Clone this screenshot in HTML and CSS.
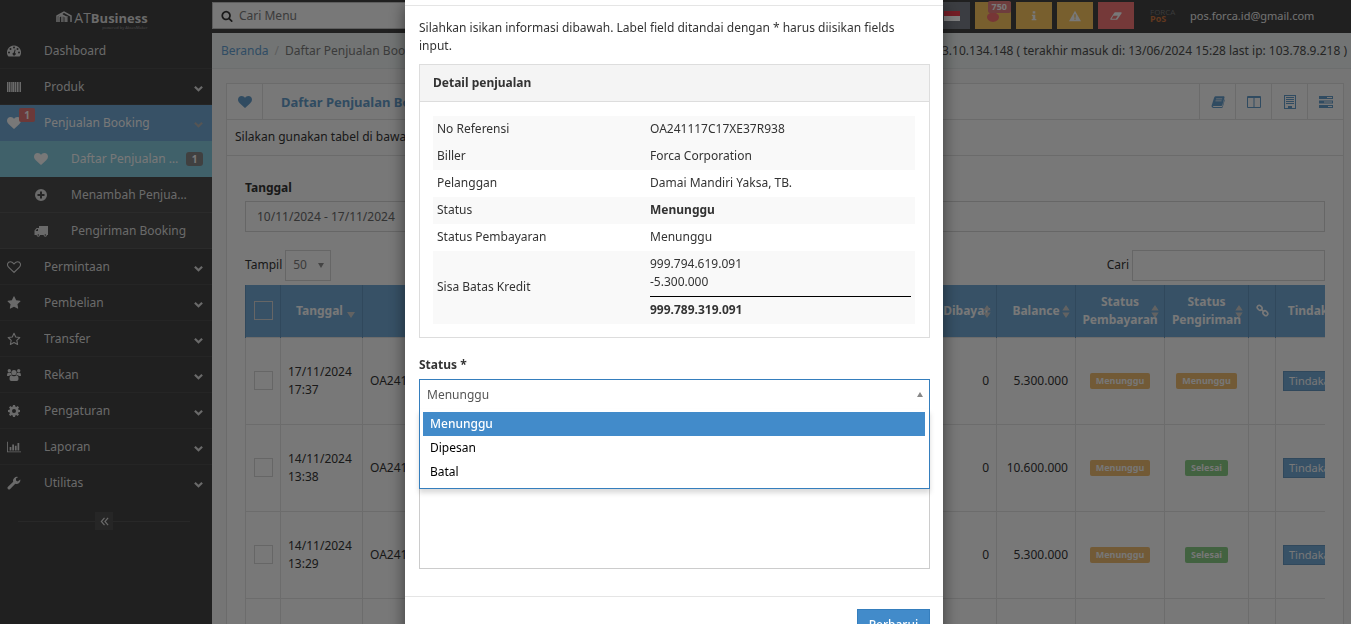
FILE: index.html
```html
<!DOCTYPE html>
<html lang="id">
<head>
<meta charset="utf-8">
<title>Daftar Penjualan Booking - ATBusiness</title>
<link rel="stylesheet" href="styles.css">
</head>
<body>
<svg class="defs" aria-hidden="true">
  <symbol id="heart" viewBox="0 0 1792 1792"><path d="M896 1664q-26 0-44-18l-624-602q-10-8-27.5-26t-55.5-65.5-68-97.5-53.5-121-23.5-138q0-220 127-344t351-124q62 0 126.5 21.5t120 58 95.5 68.5 76 68q36-36 76-68t95.5-68.5 120-58 126.5-21.5q224 0 351 124t127 344q0 221-229 450l-623 600q-18 18-44 18z"/></symbol>
  <symbol id="heart-o" viewBox="0 0 14 14"><path d="M7 12.4 1.8 7.4C-.6 5 .6 1.8 3.4 1.8 5.300 1.800 6 2.800 7 3.900 8 2.800 8.700 1.800 10.600 1.800c2.800 0 4 3.200 1.600 5.600z" fill="none" stroke="currentColor" stroke-width="1.100"/></symbol>
  <symbol id="star" viewBox="0 0 1792 1792"><path d="M1728 647q0 22-26 48l-363 354 86 500q1 7 1 20 0 21-10.500 35.500t-30.500 14.500q-19 0-40-12l-449-236-449 236q-22 12-40 12-21 0-31.500-14.500t-10.500-35.500q0-6 2-20l86-500-364-354q-25-27-25-48 0-37 56-46l502-73 225-455q19-41 49-41t49 41l225 455 502 73q56 9 56 46z"/></symbol>
  <symbol id="star-o" viewBox="0 0 14 14"><path d="M7 1.300 8.700 5l4.100.5-3 2.900.8 4L7 10.500l-3.600 1.900.8-4-3-2.900L5.300 5z" fill="none" stroke="currentColor" stroke-width="1.100" stroke-linejoin="round"/></symbol>
  <symbol id="search" viewBox="0 0 1792 1792"><path d="M1216 832q0-185-131.500-316.500t-316.500-131.500-316.500 131.500-131.500 316.500 131.500 316.500 316.500 131.500 316.500-131.500 131.500-316.500zm512 832q0 52-38 90t-90 38q-54 0-90-38l-343-342q-179 124-399 124-143 0-273.500-55.500t-225-150-150-225-55.500-273.500 55.500-273.500 150-225 225-150 273.500-55.500 273.500 55.500 225 150 150 225 55.500 273.500q0 220-124 399l343 343q37 37 37 90z"/></symbol>
  <symbol id="gauge" viewBox="0 0 14 14"><path fill-rule="evenodd" d="M7 1.500a7 7 0 0 0-6 10.600q.2.400.6.400h10.800q.4 0 .6-.4A7 7 0 0 0 7 1.500zM2 7.500a1 1 0 1 1 0 2 1 1 0 0 1 0-2zm1.500-3.500a1 1 0 1 1 0 2 1 1 0 0 1 0-2zM7 2.500a1 1 0 1 1 0 2 1 1 0 0 1 0-2zm3.500 1.500a1 1 0 1 1 0 2 1 1 0 0 1 0-2zM12 7.500a1 1 0 1 1 0 2 1 1 0 0 1 0-2zM7.700 5.500l.9.200-.7 3a1.500 1.500 0 1 1-1-.2z"/></symbol>
  <symbol id="barcode" viewBox="0 0 14 14"><path d="M0 2h1v10H0zM1.500 2H3v10H1.500zM3.500 2h1.300v10H3.500zM5.300 2h2v10h-2zM7.800 2h1.300v10H7.800zM9.700 2h1.700v10H9.700zM11.800 2h.7v10h-.7zM13 2h1v10h-1z"/></symbol>
  <symbol id="chevron" viewBox="0 0 10 10"><path d="m1 3 4 4 4-4" fill="none" stroke="currentColor" stroke-width="2.400"/></symbol>
  <symbol id="plus" viewBox="0 0 14 14"><path fill-rule="evenodd" d="M7 1a6 6 0 1 0 0 12A6 6 0 0 0 7 1zM6 3.500h2V6h2.500v2H8v2.500H6V8H3.500V6H6z"/></symbol>
  <symbol id="truck" viewBox="0 0 14 14"><path fill-rule="evenodd" d="M5 2h9v9h-1a1.700 1.700 0 0 1-3.400 0H6a1.700 1.700 0 0 1-3.400 0H.5V6.500L2.600 4H5zM1.600 7H4V5H3zM4.300 10.200a.8.800 0 1 0 0 1.600.8.800 0 0 0 0-1.600zm7 0a.8.800 0 1 0 0 1.600.8.800 0 0 0 0-1.600z"/></symbol>
  <symbol id="users" viewBox="0 0 14 14"><circle cx="2.300" cy="2.700" r="1.700"/><circle cx="11.700" cy="2.700" r="1.700"/><circle cx="7" cy="4.500" r="2.600"/><path d="M0 7.500Q0 4.500 1.500 4.800L4 5q.2 1.500 1 2H3.200q-.8.700-1 1H.8Q0 8 0 7.500zM14 7.500q0-3-1.500-2.700L10 5q-.2 1.500-1 2h1.800q.8.700 1 1h1.400q.8 0 .8-.5zM2.500 11q0-3.700 2-3.700Q5.500 8.300 7 8.300t2.500-1q2 0 2 3.700 0 2-1.800 2H4.300q-1.800 0-1.800-2z"/></symbol>
  <symbol id="gear" viewBox="0 0 14 14"><path fill-rule="evenodd" d="M6 1h2l.3 1.600 1 .4L10.700 2 12 3.400l-.9 1.400.4 1 1.500.2v2l-1.600.3-.4 1 1 1.300-1.400 1.400-1.300-.9-1 .4L8 13H6l-.3-1.500-1-.4-1.400.9L2 10.600l.9-1.300-.4-1L1 8V6l1.600-.3.400-1L2 3.400 3.400 2l1.300.9 1-.4zM7 5a2 2 0 1 0 0 4 2 2 0 0 0 0-4z"/></symbol>
  <symbol id="chart" viewBox="0 0 16 14"><path d="M0 1h1v11h15v1H0zM3 7h2v4H3zM6 4h2v7H6zM9 5.500h2V11H9zM12 2.500h2V11h-2z"/></symbol>
  <symbol id="wrench" viewBox="0 0 14 14"><path d="M13.300 3.500a3.800 3.800 0 0 1-5 4.300L3.200 13a1.500 1.500 0 0 1-2.200-2.200l5.200-5a3.900 3.900 0 0 1 5-4.800L9 2.400v2l1.600 1z"/></symbol>
  <symbol id="book" viewBox="0 0 14 14"><path fill-rule="evenodd" d="M4.500 1.200h8.300q1 .4.700 1.400L11.400 10q-.3 1-1.300 1H2.300q-.8.700.2 1h8.200l.7-.6L13.500 4l.3 1-2 7q-.4 1-1.300 1H2.300Q.4 12.700.5 11L3 3q.4-1.700 1.500-1.800zM5.200 3.500h6v.8h-6.200zM4.600 5.500h6v.8H4.400z"/></symbol>
  <symbol id="columns" viewBox="0 0 14 14"><path fill-rule="evenodd" d="M1 1h12q1 0 1 1v10q0 1-1 1H1q-1 0-1-1V2q0-1 1-1zM1 3v9h5.500V3zm6.500 0v9H13V3z"/></symbol>
  <symbol id="building" viewBox="0 0 14 14"><path fill-rule="evenodd" d="M1 0h12v14H1zM2 1v12h10V1z"/><path d="M3 2h8v1H3zM3 4h8v1H3zM3 6h8v1H3zM3 8h8v1H3zM5 11h4v2H5z"/></symbol>
  <symbol id="tasks" viewBox="0 0 14 14"><path fill-rule="evenodd" d="M0 1h14v3H0zM8 2v1h5V2zM0 5.500h14v3H0zM5 6.500v1h8v-1zM0 10h14v3H0zM9 11v1h4v-1z"/></symbol>
  <symbol id="link" viewBox="0 0 14 14"><g fill="none" stroke="currentColor" stroke-width="1.700"><rect x="1.200" y="2" width="5.600" height="4.200" rx="2" transform="rotate(45 4 4)"/><rect x="7.200" y="7.800" width="5.600" height="4.200" rx="2" transform="rotate(45 10 10)"/><path d="m5.200 5.200 3.600 3.600"/></g></symbol>
  <symbol id="sort" viewBox="0 0 8 14"><path d="M0 6 4 0l4 6zM0 8l4 6 4-6z"/></symbol>
</svg>

<div class="app">
  <aside class="sidebar">
    <a class="brand" href="#">
      <svg class="brand-mark" viewBox="0 0 16 12"><path d="M1 11V5l7-4 7 4v6M3 11V6l3-2v7M6 4l4 2v5" fill="none" stroke="currentColor" stroke-width="1.500"/><path d="M7 5h5v6H7z" opacity=".5"/></svg>
      <span class="brand-name"><span>AT<b>Business</b></span><small>powered by AksesMaker</small></span>
    </a>
    <nav>
      <ul class="menu">
        <li><a href="#"><svg class="ico"><use href="#gauge"/></svg><span class="lbl">Dashboard</span></a></li>
        <li><a href="#"><svg class="ico"><use href="#barcode"/></svg><span class="lbl">Produk</span><svg class="chev"><use href="#chevron"/></svg></a></li>
        <li class="open"><a href="#"><svg class="ico"><use href="#heart"/></svg><span class="bubble">1</span><span class="lbl">Penjualan Booking</span><svg class="chev"><use href="#chevron"/></svg></a>
          <ul class="submenu">
            <li class="current"><a href="#"><svg class="ico"><use href="#heart"/></svg><span class="lbl">Daftar Penjualan Booking</span><span class="count">1</span></a></li>
            <li><a href="#"><svg class="ico"><use href="#plus"/></svg><span class="lbl">Menambah Penjualan</span></a></li>
            <li><a href="#"><svg class="ico"><use href="#truck"/></svg><span class="lbl">Pengiriman Booking</span></a></li>
          </ul>
        </li>
        <li><a href="#"><svg class="ico"><use href="#heart-o"/></svg><span class="lbl">Permintaan</span><svg class="chev"><use href="#chevron"/></svg></a></li>
        <li><a href="#"><svg class="ico"><use href="#star"/></svg><span class="lbl">Pembelian</span><svg class="chev"><use href="#chevron"/></svg></a></li>
        <li><a href="#"><svg class="ico"><use href="#star-o"/></svg><span class="lbl">Transfer</span><svg class="chev"><use href="#chevron"/></svg></a></li>
        <li><a href="#"><svg class="ico"><use href="#users"/></svg><span class="lbl">Rekan</span><svg class="chev"><use href="#chevron"/></svg></a></li>
        <li><a href="#"><svg class="ico"><use href="#gear"/></svg><span class="lbl">Pengaturan</span><svg class="chev"><use href="#chevron"/></svg></a></li>
        <li><a href="#"><svg class="ico"><use href="#chart"/></svg><span class="lbl">Laporan</span><svg class="chev"><use href="#chevron"/></svg></a></li>
        <li><a href="#"><svg class="ico"><use href="#wrench"/></svg><span class="lbl">Utilitas</span><svg class="chev"><use href="#chevron"/></svg></a></li>
      </ul>
    </nav>
    <div class="collapse"><button type="button" aria-label="Ciutkan menu"><svg viewBox="0 0 10 10"><path d="M5 1 1.500 5 5 9M9 1 5.500 5 9 9" fill="none" stroke="currentColor" stroke-width="1.300"/></svg></button></div>
  </aside>

  <div class="main">
    <header class="topbar">
      <label class="search"><svg><use href="#search"/></svg><input type="text" placeholder="Cari Menu" aria-label="Cari Menu"></label>
      <div class="actions">
        <button class="act flag" type="button" aria-label="Bahasa"><svg viewBox="0 0 16 10"><path fill="#e83b4c" d="M0 0h16v5H0z"/><path fill="#fff" d="M0 5h16v5H0z"/></svg></button>
        <button class="act warn" type="button" aria-label="Notifikasi"><svg viewBox="0 0 14 14"><path fill="#ee6c6c" d="M3 1h8v3q3 1 3 4c0 4-4 6-7 6s-7-2-7-6q0-3 3-4z"/></svg><span class="note">750</span></button>
        <button class="act warn" type="button" aria-label="Info"><svg viewBox="0 0 14 14"><path d="M5.500 1.500h3v2.500h-3zM4.500 5.500h4v5h1.200V12H4.300v-1.500h1.200V7h-1z"/></svg></button>
        <button class="act warn" type="button" aria-label="Peringatan"><svg viewBox="0 0 14 14"><path fill-rule="evenodd" d="M7 1l7 12H0zM6.200 5v4h1.600V5zm0 5v1.500h1.600V10z"/></svg></button>
        <button class="act danger" type="button" aria-label="Hapus cache"><svg viewBox="0 0 14 14"><path fill-rule="evenodd" d="M6 2.500h7q1 .3.600 1.200l-5 7.300q-.4.500-1 .5H1Q0 11.200.4 10.300L5 3.200q.4-.6 1-.7zM4 6.800 1.800 10.300h5.100L9.200 6.800z"/></svg></button>
        <a class="user" href="#">
          <span class="user-logo"><span class="forca">FORCA</span><b>PoS</b></span>
          <span>pos.forca.id@gmail.com</span>
        </a>
      </div>
    </header>

    <div class="crumbs">
      <div><a href="#">Beranda</a><span class="sep">/</span><span>Daftar Penjualan Booking</span></div>
      <div class="ip">103.10.134.148 ( terakhir masuk di: 13/06/2024 15:28 last ip: 103.78.9.218 )</div>
    </div>

    <section class="box">
      <div class="box-head">
        <span class="cell"><svg><use href="#heart"/></svg></span>
        <h2>Daftar Penjualan Booking</h2>
        <a class="cell end" href="#" aria-label="Buku"><svg><use href="#book"/></svg></a>
        <a class="cell end" href="#" aria-label="Kolom"><svg><use href="#columns"/></svg></a>
        <a class="cell end" href="#" aria-label="Gudang"><svg><use href="#building"/></svg></a>
        <a class="cell end" href="#" aria-label="Tindakan"><svg><use href="#tasks"/></svg></a>
      </div>
      <p class="intro">Silakan gunakan tabel di bawah ini untuk menavigasi atau memfilter hasil.</p>
      <div class="box-body">
        <label class="strong" for="range">Tanggal</label>
        <input class="field" id="range" type="text" value="10/11/2024 - 17/11/2024">
        <div class="tools">
          <label>Tampil <select class="length"><option>50</option></select></label>
          <label>Cari <input class="find" type="text"></label>
        </div>
        <div class="scroll">
          <table class="list">
            <colgroup><col class="c35"><col class="c82"><col class="c173"><col class="c130"><col class="c150"><col class="c121"><col class="c60"><col class="c79"><col class="c89"><col class="c84"><col class="c27"><col class="c80"></colgroup>
            <thead><tr>
              <th><input type="checkbox" aria-label="Pilih semua"></th>
              <th class="sorted">Tanggal</th><th>No Referensi</th><th>Biller</th><th>Pelanggan</th><th>Total</th>
              <th>Dibayar<svg class="sort"><use href="#sort"/></svg></th>
              <th>Balance<svg class="sort"><use href="#sort"/></svg></th>
              <th>Status Pembayaran<svg class="sort"><use href="#sort"/></svg></th>
              <th>Status Pengiriman<svg class="sort"><use href="#sort"/></svg></th>
              <th><svg class="chain"><use href="#link"/></svg></th>
              <th>Tindakan</th>
            </tr></thead>
            <tbody>
              <tr><td class="mid"><input type="checkbox" aria-label="Pilih"></td><td>17/11/2024 17:37</td><td>OA241117C17XE37R938</td><td>Forca Corporation</td><td>Damai Mandiri Yaksa</td><td class="num">5.300.000</td><td class="num">0</td><td class="num">5.300.000</td><td class="mid"><span class="tag wait">Menunggu</span></td><td class="mid"><span class="tag wait">Menunggu</span></td><td></td><td><button class="go" type="button">Tindakan</button></td></tr>
              <tr><td class="mid"><input type="checkbox" aria-label="Pilih"></td><td>14/11/2024 13:38</td><td>OA241114C17XE37R937</td><td>Forca Corporation</td><td>Damai Mandiri Yaksa</td><td class="num">10.600.000</td><td class="num">0</td><td class="num">10.600.000</td><td class="mid"><span class="tag wait">Menunggu</span></td><td class="mid"><span class="tag done">Selesai</span></td><td></td><td><button class="go" type="button">Tindakan</button></td></tr>
              <tr><td class="mid"><input type="checkbox" aria-label="Pilih"></td><td>14/11/2024 13:29</td><td>OA241114C17XE37R936</td><td>Forca Corporation</td><td>Damai Mandiri Yaksa</td><td class="num">5.300.000</td><td class="num">0</td><td class="num">5.300.000</td><td class="mid"><span class="tag wait">Menunggu</span></td><td class="mid"><span class="tag done">Selesai</span></td><td></td><td><button class="go" type="button">Tindakan</button></td></tr>
              <tr><td></td><td></td><td></td><td></td><td></td><td></td><td></td><td></td><td></td><td></td><td></td><td></td></tr>
            </tbody>
          </table>
        </div>
      </div>
    </section>
  </div>
</div>

<div class="backdrop">
  <form class="modal" role="dialog" aria-label="Perbarui Status">
    <div class="modal-head"></div>
    <div class="modal-body">
      <p class="lead">Silahkan isikan informasi dibawah. Label field ditandai dengan * harus diisikan fields input.</p>
      <section class="card">
        <h3>Detail penjualan</h3>
        <div class="card-body">
          <table class="detail">
            <tr class="tint"><td>No Referensi</td><td>OA241117C17XE37R938</td></tr>
            <tr class="tint"><td>Biller</td><td>Forca Corporation</td></tr>
            <tr><td>Pelanggan</td><td>Damai Mandiri Yaksa, TB.</td></tr>
            <tr class="tint"><td>Status</td><td><b>Menunggu</b></td></tr>
            <tr><td>Status Pembayaran</td><td>Menunggu</td></tr>
            <tr class="tint"><td>Sisa Batas Kredit</td><td>999.794.619.091<br>-5.300.000<b class="sum">999.789.319.091</b></td></tr>
          </table>
        </div>
      </section>
      <label class="strong" for="status">Status *</label>
      <div class="picker">
        <select id="status"><option>Menunggu</option><option>Dipesan</option><option>Batal</option></select>
        <ul class="options" role="listbox" aria-label="Status">
          <li role="option" aria-selected="true">Menunggu</li>
          <li role="option">Dipesan</li>
          <li role="option">Batal</li>
        </ul>
      </div>
      <textarea class="memo" aria-label="Catatan"></textarea>
    </div>
    <div class="modal-foot"><button type="submit">Perbarui</button></div>
  </form>
</div>
</body>
</html>
```
FILE: styles.css
```css
* { box-sizing: border-box; }
html, body { height: 100%; }
body {
  margin: 0;
  overflow: hidden;
  font: 12px/18px "Noto Sans", "Open Sans", sans-serif;
  color: #333;
  background: #eaeaea;
}
input, select, button, textarea { font: inherit; color: inherit; border-radius: 0; }
ul { list-style: none; margin: 0; padding: 0; }
a { text-decoration: none; color: inherit; }
svg { fill: currentColor; flex: none; }
.defs { position: absolute; width: 0; height: 0; }

.app { display: flex; height: 100vh; overflow: hidden; }

/* Sidebar */
.sidebar { width: 212px; flex: none; background: #404040; color: #d4d4d4; }
.brand { display: flex; align-items: center; justify-content: center; gap: 2px; height: 33px; padding-right: 8px; }
.brand-mark { width: 16px; height: 12px; }
.brand-name { display: flex; flex-direction: column; padding-top: 6px; font: 14px/16px "Open Sans", sans-serif; }
.brand-name b { font-weight: 700; font-size: 13px; }
.brand-name small { font-size: 4px; line-height: 4px; text-align: right; color: #999; }
.menu a { position: relative; display: flex; align-items: center; height: 36px; padding: 1px 9px 0 7px; border-bottom: 1px solid #4a4a4a; }
.ico { width: 14px; height: 14px; margin-right: 23px; }
.lbl { flex: 1; overflow: hidden; white-space: nowrap; text-overflow: ellipsis; }
.chev { width: 9px; height: 9px; margin-top: 2px; }
.open > a { background: #6ea2cc; border-color: #6ea2cc; color: #f0f0f0; }
.open > a .chev { color: #aaa; }
.bubble { position: absolute; left: 19px; top: 3px; width: 16px; height: 14px; border-radius: 2px; background: #d87272; font-size: 10px; line-height: 14px; font-weight: 700; text-align: center; }
.submenu a { background: #4a4a4a; border-color: #565656; padding: 0 23px 0 34px; }
.submenu .current a { background: #80c2d4; border-color: #80c2d4; padding-right: 9px; color: #f0f0f0; }
.count { width: 17px; height: 14px; margin-left: 4px; border-radius: 3px; background: #808080; font-size: 10px; line-height: 14px; font-weight: 700; text-align: center; }
.menu > li:last-child a { border-color: transparent; }
.collapse { display: flex; align-items: center; padding: 11px 22px 0 18px; }
.collapse::before, .collapse::after { content: ""; flex: 1; border-top: 1px solid #505050; }
.collapse button { display: flex; align-items: center; justify-content: center; width: 18px; height: 18px; padding: 0; border: 0; background: #4c4c4c; }
.collapse svg { width: 9px; height: 9px; }

/* Top bar */
.main { flex: 1; min-width: 0; }
.topbar { display: flex; justify-content: space-between; height: 33px; padding: 2px 0 4px; background: #404040; }
.search { display: flex; align-items: center; gap: 6px; width: 240px; padding: 0 8px; border: 1px solid #bbb; background: #f0f0f0; }
.search svg { width: 12px; height: 12px; }
.search input { flex: 1; min-width: 0; border: 0; padding: 0; background: none; outline: 0; }
.search input::placeholder { color: #777; }
.actions { display: flex; gap: 5px; }
.act { position: relative; display: flex; align-items: center; justify-content: center; width: 36px; padding: 0; border: 0; color: #f0f0f0; }
.act svg { width: 12px; height: 12px; }
.act.flag { background: #777b84; }
.act.flag svg { width: 16px; height: 10px; }
.warn { background: #f0bf5c; }
.danger { background: #ea7373; }
.note { position: absolute; right: 0; top: -1px; padding: 0 4px; border-radius: 2px; background: #dd7a7a; color: #f0f0f0; font-size: 9px; line-height: 12px; font-weight: 700; }
.user { display: flex; align-items: center; gap: 10px; width: 212px; padding-left: 11px; color: #e4e4e4; font-size: 11px; }
.user-logo { display: flex; flex-direction: column; width: 30px; font: 8px/7px "Open Sans", sans-serif; }
.user-logo b { font-size: 9px; line-height: 8px; color: #c4703c; }
.forca { color: #757575; }

/* Breadcrumb */
.crumbs { display: flex; justify-content: space-between; height: 36px; padding: 9px 4px 0 9px; border-bottom: 1px solid #d8dcdc; background: #e4e9e8; color: #777; white-space: nowrap; }
.crumbs a { color: #6098c8; }
.sep { margin: 0 6px; color: #bbb; }
.ip { color: #4a4a4a; }

/* Panel */
.box { margin: 14px 7px 0 14px; border: 1px solid #d6d6d6; background: #f0f0f0; }
.box-head { display: flex; height: 36px; border-bottom: 1px solid #d6d6d6; color: #6096c2; }
.box-head h2 { flex: 1; margin: 0; padding: 9px 18px; font-size: 13px; line-height: 18px; }
.cell { display: flex; align-items: center; justify-content: center; width: 36px; border-right: 1px solid #d6d6d6; }
.cell.end { border-right: 0; border-left: 1px solid #d6d6d6; }
.cell svg { width: 14px; height: 14px; }
.intro { margin: 0; padding: 8px 8px 9px; border-bottom: 1px solid #d6d6d6; }
.box-body { padding: 23px 18px 0; }
.strong { display: block; font-weight: 700; }
.field { display: block; width: 100%; height: 31px; margin-top: 4px; padding: 0 11px; border: 1px solid #ccc; background: #f0f0f0; color: #666; }
.tools { display: flex; justify-content: space-between; align-items: center; height: 32px; margin: 17px 0 4px; }
.tools label { display: flex; align-items: center; gap: 3px; }
.length, .picker select { appearance: none; border: 1px solid #ccc; background: #f0f0f0 url("data:image/svg+xml,%3Csvg xmlns='http://www.w3.org/2000/svg' width='6' height='5'%3E%3Cpath fill='%23888' d='M0 0h6L3 5z'/%3E%3C/svg%3E") no-repeat right 6px center; color: #777; outline: 0; }
.length { width: 46px; height: 31px; padding: 0 7px; }
.find { width: 193px; height: 31px; border: 1px solid #ccc; background: #f0f0f0; }

.scroll { overflow: hidden; }
.list { width: 1110px; table-layout: fixed; border-collapse: collapse; }
.c35 { width: 35px; } .c82 { width: 82px; } .c173 { width: 173px; } .c130 { width: 130px; }
.c150 { width: 150px; } .c121 { width: 121px; } .c60 { width: 60px; } .c79 { width: 79px; }
.c89 { width: 89px; } .c84 { width: 84px; } .c27 { width: 27px; } .c80 { width: 80px; }
.list th { position: relative; height: 52px; padding: 0; border: 1px solid #6090b8; border-width: 0 1px; background: #6ea2cc; color: #f0f0f0; }
.list td { height: 87px; padding: 0 7px; border: 1px solid #d8d8d8; white-space: nowrap; overflow: hidden; }
.list td:nth-child(2) { white-space: normal; }
.list .mid { text-align: center; }
.list .num { text-align: right; }
.list input { appearance: none; display: block; width: 19px; height: 19px; margin: 0 auto; border: 1px solid #ccc; }
.list .sorted { padding-left: 8px; }
.sorted::after { content: ""; display: inline-block; margin-left: 4px; border: solid transparent; border-width: 6px 4px 0; border-top-color: #c4c4c4; vertical-align: -3px; }
.sort { position: absolute; right: 5px; top: 20px; width: 8px; height: 13px; color: #c4c4c4; }
.chain { display: block; width: 13px; height: 13px; margin: auto; }
.tag { display: inline-block; padding: 0 6px; border-radius: 2px; color: #eee; font-size: 9px; line-height: 16px; font-weight: 700; vertical-align: middle; }
.wait { background: #e5b46c; }
.done { background: #84c480; }
.go { height: 20px; padding: 0 5px; border: 1px solid #6090b8; background: #6ea2cc; color: #f0f0f0; font-size: 11px; line-height: 18px; }

/* Modal */
.backdrop { position: fixed; inset: 0; display: flex; justify-content: center; align-items: flex-start; padding-right: 3px; overflow: hidden; background: rgba(0, 0, 0, .5); }
.modal { width: 538px; background: #fff; box-shadow: 0 5px 15px rgba(0, 0, 0, .5); }
.modal-head { height: 6px; border-bottom: 1px solid #e5e5e5; }
.modal-body { padding: 13px 13px 27px 14px; }
.lead { margin: 0 0 9px; }
.card { margin-bottom: 18px; border: 1px solid #ddd; }
.card h3 { margin: 0; padding: 9px 13px; border-bottom: 1px solid #ddd; background: #f4f4f4; font-size: 12px; line-height: 18px; }
.card-body { padding: 14px 14px 13px 13px; }
.detail { width: 100%; table-layout: fixed; border-collapse: collapse; }
.detail td { height: 27px; padding: 4px 4px 5px; }
.detail td:first-child { width: 213px; }
.tint { background: #f9f9f9; }
.sum { display: block; margin-top: 5px; padding-top: 4px; border-top: 1px solid #000; }
.picker { position: relative; margin-top: 5px; }
.picker select { display: block; width: 100%; height: 31px; padding: 1px 7px 0; border-color: #357ebd; background-color: #fff; background-image: url("data:image/svg+xml,%3Csvg xmlns='http://www.w3.org/2000/svg' width='6' height='5'%3E%3Cpath fill='%23888' d='M0 5h6L3 0z'/%3E%3C/svg%3E"); color: #555; }
.options { position: absolute; left: 0; right: 0; top: 30px; height: 80px; padding: 3px 4px 3px 3px; border: 1px solid #357ebd; border-top: 0; background: #fff; color: #000; box-shadow: 0 4px 5px rgba(0, 0, 0, .15); }
.options li { padding: 3px 7px; }
.options li[aria-selected] { background: #428bca; color: #fff; font-weight: 500; }
.memo { display: block; width: 100%; height: 133px; margin-top: 26px; border: 1px solid #ccc; resize: none; }
.modal-foot { display: flex; justify-content: flex-end; padding: 12px 13px 20px; border-top: 1px solid #e5e5e5; }
.modal-foot button { width: 73px; height: 32px; border: 1px solid #357ebd; background: #428bca; color: #fff; font-weight: 500; }
```
